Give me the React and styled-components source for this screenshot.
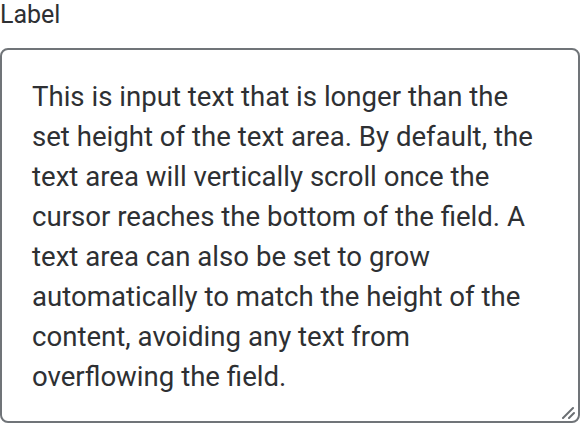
import React from "react";
import styled, { createGlobalStyle } from "styled-components";

const GlobalStyle = createGlobalStyle`
  html, body {
    margin: 0;
    padding: 0;
    background: #ffffff;
  }
  body {
    font-family: Roboto, "Liberation Sans", sans-serif;
  }
`;

const Field = styled.div`
  display: flex;
  flex-direction: column;
  gap: 18px;
  width: 580px;
`;

const Label = styled.label`
  font-size: 25px;
  line-height: 30px;
  color: #2e3033;
`;

const AreaWrap = styled.div`
  position: relative;
  display: flex;
`;

const TextArea = styled.textarea`
  box-sizing: border-box;
  width: 100%;
  height: 375px;
  margin: 0;
  padding: 27px 30px;
  border: 2px solid #707478;
  border-radius: 8px;
  font-family: Roboto, "Liberation Sans", sans-serif;
  font-size: 27.6px;
  line-height: 40px;
  color: #2e3033;
  background: #ffffff;
  resize: vertical;
  outline: none;
  overflow: hidden;

  &::-webkit-resizer {
    background: transparent;
  }
`;

const Grip = styled.svg`
  position: absolute;
  right: 5px;
  bottom: 4px;
  width: 14px;
  height: 14px;
  pointer-events: none;
`;

const text =
  "This is input text that is longer than the set height of the text area. By default, the text area will vertically scroll once the cursor reaches the bottom of the field. A text area can also be set to grow automatically to match the height of the content, avoiding any text from overflowing the field.";

export default function App() {
  return (
    <>
      <GlobalStyle />
      <Field>
        <Label htmlFor="ta">Label</Label>
        <AreaWrap>
          <TextArea id="ta" defaultValue={text} />
          <Grip viewBox="0 0 14 14">
            <line x1="2" y1="13" x2="12" y2="3" stroke="#6b6f73" strokeWidth="2" strokeLinecap="round" />
            <line x1="8" y1="13" x2="13" y2="8" stroke="#6b6f73" strokeWidth="2" strokeLinecap="round" />
          </Grip>
        </AreaWrap>
      </Field>
    </>
  );
}
